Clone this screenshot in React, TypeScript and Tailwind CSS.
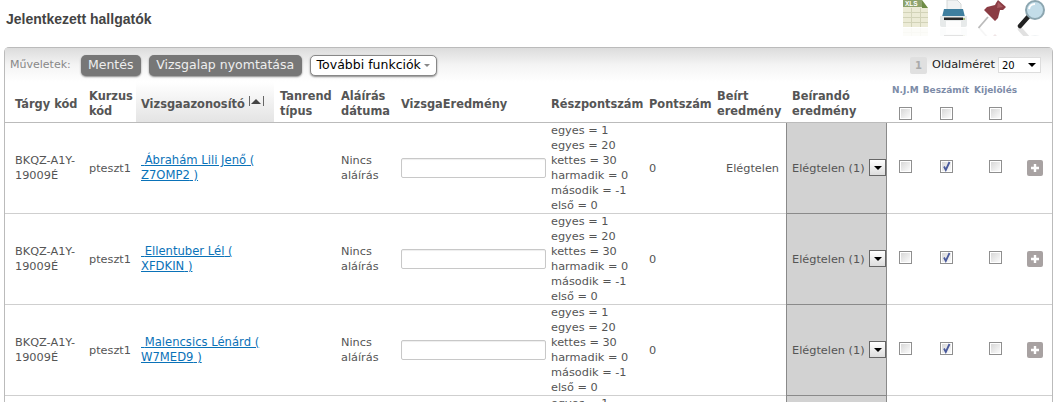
const font = "font-['DejaVu_Sans',Verdana,sans-serif]";

function Cb({ checked }: { checked?: boolean }) {
  return (
    <span className="relative block w-[13px] h-[13px] border border-[#8f8f8f] bg-gradient-to-br from-[#d4d4d4] to-white shadow-[inset_0_0_0_1px_#fff]">
      {checked && (
        <svg viewBox="0 0 11 11" className="absolute left-0 top-0 w-[11px] h-[11px]">
          <path d="M3 5.5l1.8 3.5L8.5 1" fill="none" stroke="#4a5a9c" strokeWidth="1.8" />
        </svg>
      )}
    </span>
  );
}

const parts = ["egyes = 1", "egyes = 20", "kettes = 30", "harmadik = 0", "második = -1", "első = 0"];

function Row({ first, last, result, empty }: { first?: string; last?: string; result?: string; empty?: boolean }) {
  return (
    <div className="flex h-[91px] border-b border-[#cfcfcf] text-[11.3px] leading-[15px] text-[#555]">
      <div className="w-[83px] pl-[10px] flex items-center">{!empty && <span className="w-[65px]">BKQZ-A1Y-19009É</span>}</div>
      <div className="w-[48px] pl-[1px] flex items-center">{!empty && "pteszt1"}</div>
      <div className="w-[138px] pl-[5px] flex items-center">
        {!empty && <a className="block w-[122px] text-[11.6px] text-[#0a72b8] underline">&nbsp;{first} ( {last} )</a>}
      </div>
      <div className="w-[67px]" />
      <div className="w-[60px] flex items-center">{!empty && <span className="w-[50px]">Nincs aláírás</span>}</div>
      <div className="w-[150px] flex items-center">
        {!empty && <span className="block w-[145px] h-[20px] bg-white border border-[#c8c8c8] rounded-[2px] shadow-[inset_0_1px_1px_#eee]" />}
      </div>
      <div className="w-[98px] flex flex-col justify-center">
        {parts.map((p, i) => <span key={i} className="block whitespace-nowrap">{p}</span>)}
      </div>
      <div className="w-[77px] flex items-center">{!empty && "0"}</div>
      <div className="w-[60px] flex items-center">{result}</div>
      <div className="w-[101px] h-[91px] bg-[#d2d2d2] border-x border-b border-[#8a8a8a] flex items-center pl-[5px] whitespace-nowrap">
        {!empty && (
          <>
            <span className="w-[77px]">Elégtelen (1)</span>
            <span className="mb-[1px] w-[17px] h-[17px] bg-gradient-to-b from-white to-[#ddd] border border-[#666] flex items-center justify-center">
              <span className="block w-0 h-0 border-x-[4px] border-x-transparent border-t-[4px] border-t-black" />
            </span>
          </>
        )}
      </div>
      {!empty && (
        <>
          <div className="w-[41px] flex items-center pl-[12px] pb-[3px]"><Cb /></div>
          <div className="w-[49px] flex items-center pl-[12px] pb-[3px]"><Cb checked /></div>
          <div className="w-[40px] flex items-center pl-[12px] pb-[3px]"><Cb /></div>
          <div className="flex items-center pl-[10px]">
            <span className="w-[16px] h-[16px] rounded-[2px] bg-[#a8a2a2] flex items-center justify-center">
              <svg viewBox="0 0 10 10" className="w-[10px] h-[10px]"><path d="M5 1v8M1 5h8" stroke="#fff" strokeWidth="2.4" /></svg>
            </span>
          </div>
        </>
      )}
    </div>
  );
}

function Mirror({ children, over, w }: { children: React.ReactNode; over?: React.ReactNode; w: number }) {
  return (
    <svg viewBox={`0 0 ${w} 38`} width={w} height={38} className="block">
      {children}
      {over}
      <g transform="translate(0,55) scale(1,-1)" opacity="0.13">{children}</g>
      <rect x="0" y="36" width={w} height="2" fill="#fff" />
    </svg>
  );
}

export default function App() {
  return (
    <div className={`${font} w-[1063px] h-[402px] overflow-hidden bg-white`}>
      <div className="flex h-[47px]">
        <h1 className="font-['Liberation_Sans',Arial,sans-serif] font-bold text-[14px] leading-[16px] text-[#444] pl-[6px] pt-[11px] flex-1">Jelentkezett hallgatók</h1>
        <div className="flex gap-[10px] pr-[17px] items-start">
          <Mirror
            w={28}
            over={<text x="4" y="6" fontSize="6.500" fontWeight="bold" fill="#fff" fontFamily="Liberation Sans">XLS</text>}
          >
            <path d="M2 0h19l6 8v19H2z" fill="#ecebd6" />
            <path d="M2 0h19v7H2z" fill="#8ea36c" />
            <path d="M21 0l6 8h-6z" fill="#6e8c45" />
            <path d="M2 12.5h25M2 17.500h25M2 22.500h25M10.500 8v19M19.500 8v19" stroke="#d2d3b8" />
          </Mirror>
          <Mirror w={29}>
            <path d="M8 0h10l4 4v6H8z" fill="#f1f3f3" stroke="#d4d8d8" />
            <path d="M5 9h19l2 8H3z" fill="#3f7f9f" />
            <path d="M1 16h27v9a2 2 0 0 1-2 2H3a2 2 0 0 1-2-2z" fill="#e7eaea" />
            <rect x="5" y="17.500" width="19" height="2.500" fill="#2a2a2a" />
            <rect x="7" y="21" width="15" height="6" fill="#fdfdfd" />
            <circle cx="25" cy="19" r="1" fill="#9ab35e" />
          </Mirror>
          <Mirror w={29}>
            <path d="M0.500 28L10 17" stroke="#bbb" strokeWidth="1.800" />
            <path d="M20 0l8 7-3 3-3 0-2 8-3 3L6 10l3-3 8-2 1-2z" fill="#8b3c44" />
            <path d="M20 2l5 5-6 1z" fill="#a85a60" />
          </Mirror>
          <Mirror w={29}>
            <path d="M3 26l8-9" stroke="#222" strokeWidth="4.500" strokeLinecap="round" />
            <circle cx="18" cy="10" r="9" fill="#c3dde9" stroke="#8ca6b0" strokeWidth="2" />
            <path d="M12 9a6 6 0 0 1 6-5" stroke="#fff" strokeWidth="2" fill="none" />
          </Mirror>
        </div>
      </div>
      <div className="ml-[4px] w-[1049px] border-x border-t border-[#bbb] rounded-t-[5px] text-[#333]">
        <div className="bg-gradient-to-b from-[#dcdcdc] via-[#f4f4f4] to-white">
          <div className="flex items-center h-[34px] pl-[5px] text-[11px]">
            <span className="text-[#888] mr-[10px]">Műveletek:</span>
            <span className="h-[21px] w-[60px] rounded-[5px] bg-[#777] text-[#eee] text-[12.500px] flex items-center justify-center mr-[8px] shadow-[0_1px_2px_#888]">Mentés</span>
            <span className="h-[21px] w-[153px] rounded-[5px] bg-[#777] text-[#eee] text-[12.500px] flex items-center justify-center mr-[8px] shadow-[0_1px_2px_#888] whitespace-nowrap">Vizsgalap nyomtatása</span>
            <span className="h-[21px] w-[127px] rounded-[5px] bg-white border border-[#888] text-black text-[12.500px] flex items-center justify-center gap-[3px] shadow-[0_1px_2px_#888] whitespace-nowrap">
              További funkciók
              <span className="block w-0 h-0 border-x-[3px] border-x-transparent border-t-[3px] border-t-[#888]" />
            </span>
            <span className="ml-auto w-[17px] h-[17px] bg-[#e0e0e0] rounded-[2px] text-[#aaa] font-bold text-[10px] flex items-center justify-center">1</span>
            <span className="ml-[5px] text-[#222] text-[11.300px]">Oldalméret</span>
            <span className="ml-[3px] mr-[11px] w-[43px] h-[16px] bg-white border border-[#ddd] text-[10px] text-black flex items-center justify-between pl-[3px] pr-[4px]">
              20
              <span className="block w-0 h-0 border-x-[4px] border-x-transparent border-t-[4px] border-t-black" />
            </span>
          </div>
        </div>
        <div className="flex h-[41px] border-b border-[#bbb] text-[11.400px] leading-[15px] font-bold text-[#555]">
          <div className="w-[83px] pl-[10px] pt-[15px] whitespace-nowrap">Tárgy kód</div>
          <div className="w-[48px] pl-[1px] pt-[7px]">Kurzus<br />kód</div>
          <div className="w-[138px] pl-[5px] pt-[15px] bg-gradient-to-b from-white to-[#e4e4e4] whitespace-nowrap flex items-start gap-[4px]">
            Vizsgaazonosító
            <span className="mt-[-1px] w-[15px] h-[10px] border-x border-[#666] flex items-center justify-center">
              <span className="block w-0 h-0 border-x-[5px] border-x-transparent border-b-[5px] border-b-[#444]" />
            </span>
          </div>
          <div className="w-[67px] pl-[6px] pt-[7px]">Tanrend<br />típus</div>
          <div className="w-[60px] pt-[7px]">Aláírás<br />dátuma</div>
          <div className="w-[150px] pt-[15px]">VizsgaEredmény</div>
          <div className="w-[98px] pt-[15px]">Részpontszám</div>
          <div className="w-[68px] pt-[15px]">Pontszám</div>
          <div className="w-[69px] pt-[7px]">Beírt<br />eredmény</div>
          <div className="w-[106px] pl-[6px] pt-[7px]">Beírandó<br />eredmény</div>
          <div className="flex-1">
            <div className="flex text-[9px] leading-[11px] text-[#7d8ca8] pt-[3px] gap-[5px] whitespace-nowrap">
              <span>N.J.M</span><span className="-ml-[1px]">Beszámít</span><span>Kijelölés</span>
            </div>
            <div className="flex pl-[7px] mt-[11px]">
              <span className="mr-[28px]"><Cb /></span><span className="mr-[36px]"><Cb /></span><Cb />
            </div>
          </div>
        </div>
        <Row first="Ábrahám Lili Jenő" last="Z7OMP2" result="Elégtelen" />
        <Row first="Ellentuber Lél" last="XFDKIN" />
        <Row first="Malencsics Lénárd" last="W7MED9" />
        <Row empty />
      </div>
    </div>
  );
}
